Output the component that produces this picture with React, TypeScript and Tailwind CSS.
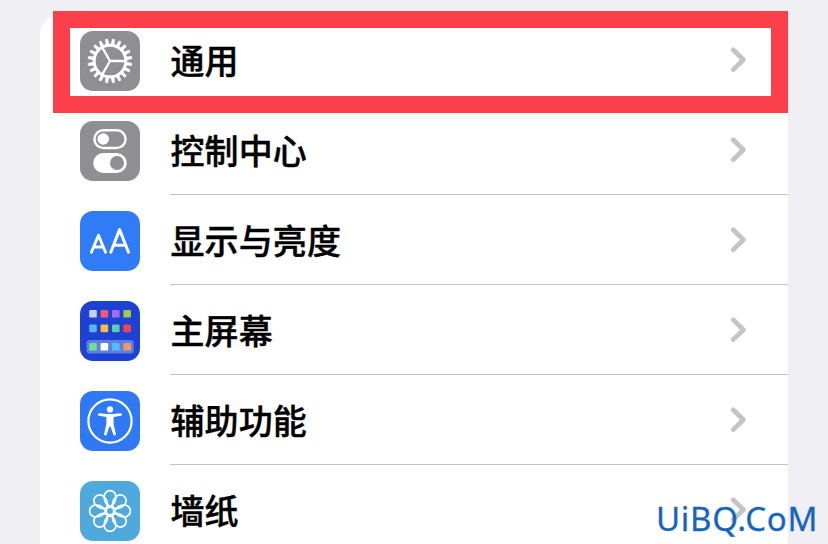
import type { ReactNode } from 'react';

const polar = (r: number, deg: number) => {
  const a = (deg * Math.PI) / 180;
  return `${(30 + r * Math.cos(a)).toFixed(2)} ${(30 + r * Math.sin(a)).toFixed(2)}`;
};

function GearIcon() {
  const teeth = Array.from({ length: 20 }, (_, i) => 9 + i * 18);
  return (
    <svg className="w-15 h-15" viewBox="0 0 60 60" fill="none" stroke="white">
      <circle cx="30" cy="30" r="15.8" strokeWidth="2.9" />
      {teeth.map((deg) => (
        <path
          key={deg}
          d={`M${polar(16.5, deg - 5)} L${polar(22, deg - 2.6)} L${polar(22, deg + 2.6)} L${polar(16.5, deg + 5)}Z`}
          fill="white"
          strokeWidth="0.8"
          strokeLinejoin="round"
        />
      ))}
      <path d={`M30 30L${polar(16, 0)}M30 30L${polar(16, 120)}M30 30L${polar(16, 240)}`} strokeWidth="2.3" />
    </svg>
  );
}

function TogglesIcon() {
  return (
    <svg className="w-15 h-15" viewBox="0 0 60 60" fill="none">
      <rect x="14.4" y="9.2" width="31.2" height="17.8" rx="8.9" stroke="white" strokeWidth="2.4" />
      <circle cx="23.2" cy="18" r="5.8" fill="white" />
      <rect x="13.2" y="32" width="33.6" height="20" rx="10" fill="white" />
      <circle cx="37" cy="42" r="7" fill="#8e8e93" />
    </svg>
  );
}

function TextSizeIcon() {
  return (
    <svg className="w-15 h-15" viewBox="0 0 60 60" fill="none" stroke="white" strokeLinecap="round" strokeLinejoin="round">
      <path d="M11.4 41.2L18.5 24.2L25.5 41.2M14 36H23" strokeWidth="2.9" />
      <path d="M30.8 41.2L39.6 18.6L48.5 41.2M33.6 34.2H45.6" strokeWidth="3" />
    </svg>
  );
}

const appColors = [
  ['#c9d0e6', '#f5586f', '#a66bf5', '#a3c94b'],
  ['#58b4f5', '#f9bd43', '#58cfae', '#f24350'],
  ['#6fe08a', '#ffffff', '#55bdf8', '#f29a5c'],
];
const appRows = [9, 23.6, 42];

function HomeScreenIcon() {
  return (
    <svg className="w-15 h-15" viewBox="0 0 60 60">
      <rect x="6.5" y="39" width="47.2" height="13.4" rx="3" fill="#5f7ee3" />
      {appColors.map((row, r) =>
        row.map((color, c) => (
          <rect key={`${r}-${c}`} x={9.2 + c * 11.4} y={appRows[r]} width="7.6" height="7.6" rx="1.2" fill={color} />
        ))
      )}
    </svg>
  );
}

function AccessibilityIcon() {
  return (
    <svg className="w-15 h-15" viewBox="0 0 60 60">
      <circle cx="30" cy="30" r="21.6" fill="none" stroke="white" strokeWidth="2.2" />
      <circle cx="30" cy="18.4" r="3.1" fill="white" />
      <path
        d="M19.6 22.2L27 22.9Q30 23.1 33 22.9L40.4 22.2Q42 22.2 42 23.4Q42 24.5 40.8 24.7L33.6 26V33L35.9 42.9Q36.1 44.3 34.9 44.6Q33.8 44.7 33.3 43.5L30.5 35.4H29.5L26.7 43.5Q26.2 44.7 25.1 44.6Q23.9 44.3 24.1 42.9L26.4 33V26L19.2 24.7Q18 24.5 18 23.4Q18 22.2 19.6 22.2Z"
        fill="white"
      />
    </svg>
  );
}

function FlowerIcon() {
  const petals = [0, 45, 90, 135, 180, 225, 270, 315];
  return (
    <svg className="w-15 h-15" viewBox="0 0 60 60" fill="none" stroke="white" strokeWidth="1.7" strokeLinejoin="round">
      {petals.map((deg) => (
        <path
          key={deg}
          transform={`rotate(${deg} 30 30)`}
          d="M30 25.8L25.6 21.8C24.7 20 24.2 17.6 24.2 15.4A5.8 5.8 0 0 1 35.8 15.4C35.8 17.6 35.3 20 34.4 21.8Z"
        />
      ))}
      <circle cx="30" cy="30" r="3.8" />
    </svg>
  );
}

function Chevron() {
  return (
    <svg className="w-5 h-7" viewBox="0 0 20 28" fill="none" stroke="#c4c4c6" strokeWidth="4.8" strokeLinecap="round" strokeLinejoin="round">
      <path d="M5.2 3.8L15.4 13.7L5.2 23.6" />
    </svg>
  );
}

interface Setting {
  label: string;
  tile: string;
  icon: ReactNode;
}

const settings: Setting[] = [
  { label: '通用', tile: 'bg-[#8e8e93]', icon: <GearIcon /> },
  { label: '控制中心', tile: 'bg-[#8e8e93]', icon: <TogglesIcon /> },
  { label: '显示与亮度', tile: 'bg-[#2f7cf6]', icon: <TextSizeIcon /> },
  { label: '主屏幕', tile: 'bg-[#1c41d3]', icon: <HomeScreenIcon /> },
  { label: '辅助功能', tile: 'bg-[#2f78f6]', icon: <AccessibilityIcon /> },
  { label: '墙纸', tile: 'bg-[#50a9dc]', icon: <FlowerIcon /> },
];

function SettingRow({ label, tile, icon }: Setting) {
  return (
    <li className="flex h-[90px] pl-10">
      <div className={`mt-4 w-15 h-15 shrink-0 overflow-hidden rounded-[13px] ${tile}`}>{icon}</div>
      <div className="ml-[30px] flex flex-1 items-center justify-between border-b border-[#c4c4c6] pr-10">
        <span className="text-[34px] leading-none font-medium text-black [-webkit-text-stroke:0.4px_black] pl-[0.5px] tracking-[0.1px]">
          {label}
        </span>
        <Chevron />
      </div>
    </li>
  );
}

export default function App() {
  return (
    <div className="relative h-[544px] w-[828px] overflow-hidden bg-[#efeff4] pt-[15px] pl-10 font-['Noto_Sans_CJK_SC',sans-serif]">
      <ul className="w-[748px] overflow-hidden rounded-t-[20px] bg-white">
        {settings.map((setting) => (
          <SettingRow key={setting.label} {...setting} />
        ))}
      </ul>

      {/* Highlight around the first row */}
      <div className="pointer-events-none absolute top-[11px] left-[53px] h-[102px] w-[735px] border-[17px] border-[#fc404b]"></div>

      <div className="absolute top-[497px] left-[656px] font-['Noto_Sans',sans-serif] text-[33px] leading-[44px] tracking-[0.7px] whitespace-nowrap text-[#1565c0] [-webkit-text-stroke:0.3px_#1565c0]">
        UiBQ.CoM
      </div>
    </div>
  );
}
